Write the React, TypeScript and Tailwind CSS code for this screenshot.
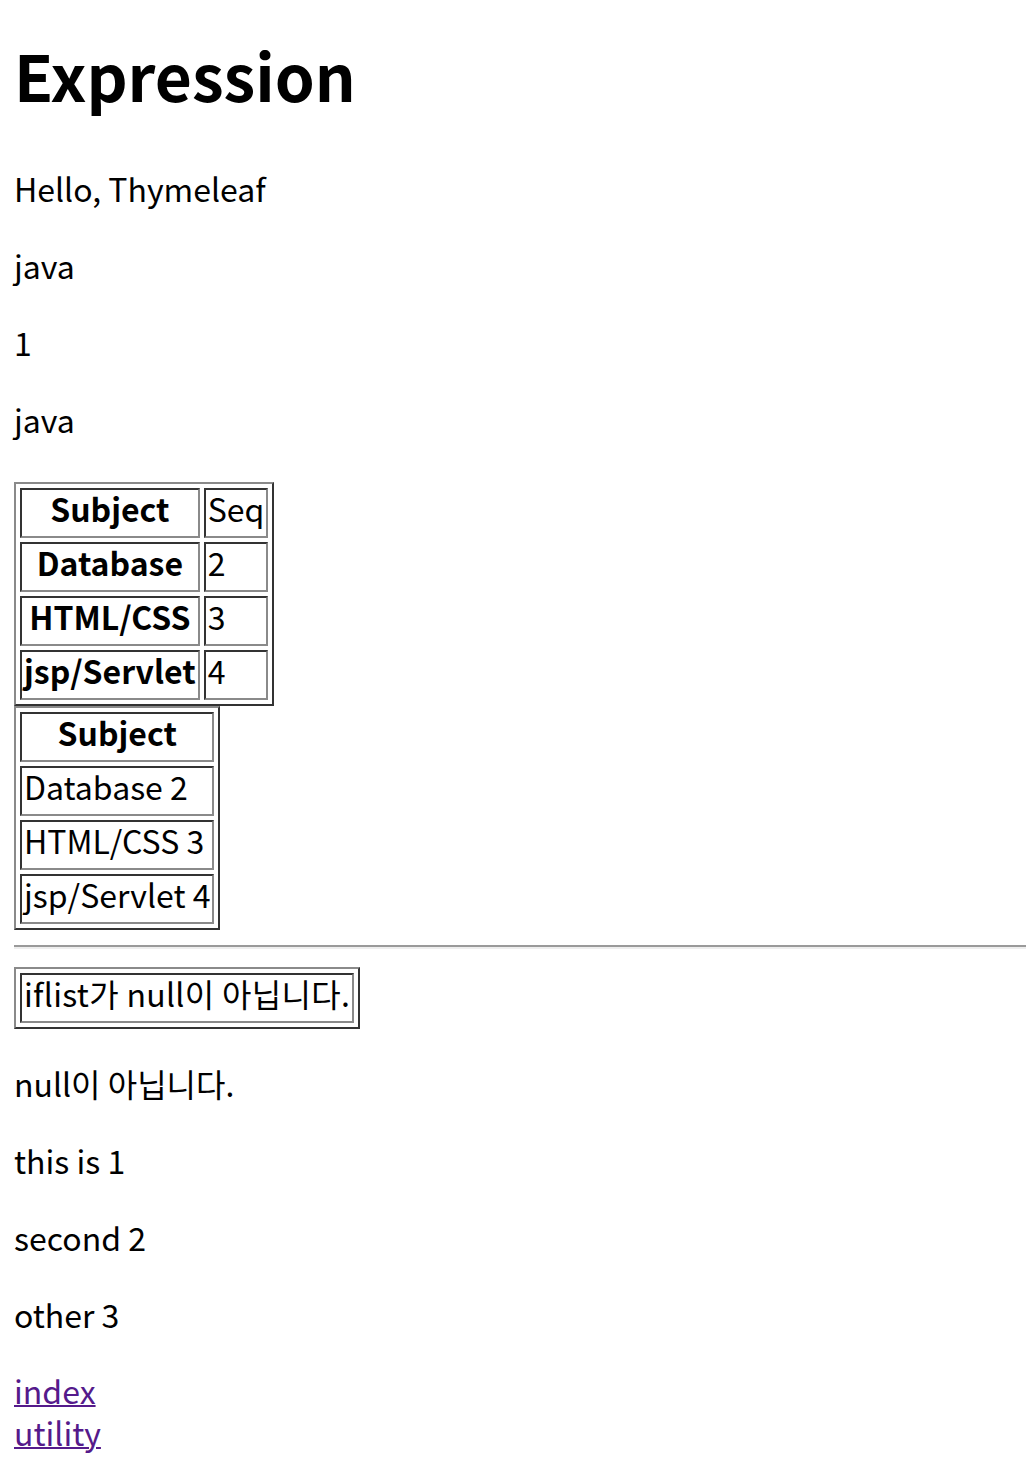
import React from 'react';

const rows = [
  { subject: 'Database', seq: 2 },
  { subject: 'HTML/CSS', seq: 3 },
  { subject: 'jsp/Servlet', seq: 4 },
];

const tableCls =
  'border-separate border-spacing-[4px] border-2 border-t-[#8a8a8a] border-l-[#8a8a8a] border-b-[#333] border-r-[#333]';
const cellCls =
  'px-[2px] pt-[2px] pb-[12px] border-2 border-t-[#333] border-l-[#333] border-b-[#8a8a8a] border-r-[#8a8a8a] leading-[32px] whitespace-nowrap';

export default function App() {
  return (
    <div className="min-h-screen bg-white pl-[14px] pt-[34px] pb-[20px] text-[32px] text-black font-['Noto_Sans_CJK_KR','Noto_Sans',sans-serif]">
      <h1 className="text-[64px] leading-[80px] font-bold">Expression</h1>

      <p className="mt-[52px] leading-[45px]">Hello, Thymeleaf</p>
      <p className="mt-[32px] leading-[45px]">java</p>
      <p className="mt-[32px] leading-[45px]">1</p>
      <p className="mt-[32px] leading-[45px]">java</p>

      <table className={`mt-[40px] ${tableCls}`}>
        <tbody>
          <tr>
            <th className={`${cellCls} font-bold text-center`}>Subject</th>
            <td className={`${cellCls} text-left`}>Seq</td>
          </tr>
          {rows.map((r) => (
            <tr key={r.subject}>
              <th className={`${cellCls} font-bold text-center`}>{r.subject}</th>
              <td className={`${cellCls} text-left`}>{r.seq}</td>
            </tr>
          ))}
        </tbody>
      </table>

      <table className={tableCls}>
        <tbody>
          <tr>
            <th className={`${cellCls} font-bold text-center`}>Subject</th>
          </tr>
          {rows.map((r) => (
            <tr key={r.subject}>
              <td className={`${cellCls} text-left`}>
                {r.subject} {r.seq}
              </td>
            </tr>
          ))}
        </tbody>
      </table>

      <hr className="mt-[15px] h-0 border-0 border-t-2 border-b-2 border-t-[#9a9a9a] border-b-[#eeeeee]" />

      <table className={`mt-[18px] ${tableCls}`}>
        <tbody>
          <tr>
            <td className={`${cellCls} tracking-[0.3px]`}>iflist가 null이 아닙니다.</td>
          </tr>
        </tbody>
      </table>

      <p className="mt-[32px] leading-[45px]">null이 아닙니다.</p>
      <p className="mt-[32px] leading-[45px]">this is 1</p>
      <p className="mt-[32px] leading-[45px]">second 2</p>
      <p className="mt-[32px] leading-[45px]">other 3</p>

      <div className="mt-[32px] leading-[42px]">
        <a href="#" className="text-[#551a8b] underline decoration-2">index</a>
        <br />
        <a href="#" className="text-[#551a8b] underline decoration-2">utility</a>
      </div>
    </div>
  );
}
